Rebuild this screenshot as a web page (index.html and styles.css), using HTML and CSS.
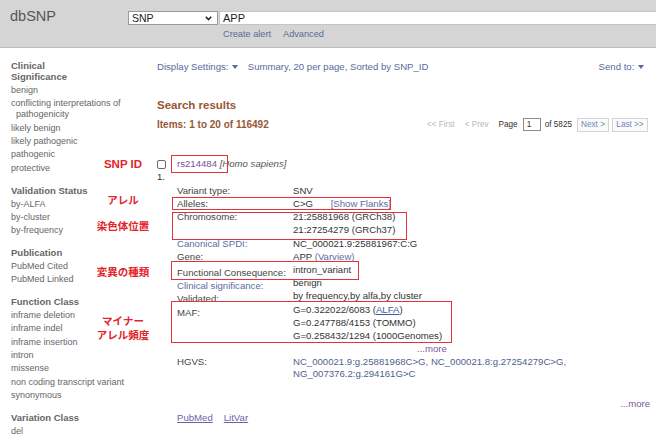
FILE: index.html
```html
<!DOCTYPE html>
<html lang="ja">
<head>
<meta charset="utf-8">
<title>dbSNP</title>
<link rel="stylesheet" href="styles.css">
</head>
<body>
<header class="hdr">
  <div class="logo">dbSNP</div>
  <div class="search">
    <div class="search-row">
      <div class="db-select"><span>SNP</span><svg class="chev" width="7" height="5" viewBox="0 0 7 5"><polyline points="0.8,0.8 3.5,3.6 6.2,0.8" fill="none" stroke="#222" stroke-width="1.5"/></svg></div>
      <div class="term">APP</div>
    </div>
    <div class="search-links"><a href="#">Create alert</a><a href="#">Advanced</a></div>
  </div>
</header>

<div class="page">
  <aside class="side">
    <section class="grp">
      <h3>Clinical Significance</h3>
      <ul>
        <li>benign</li>
        <li class="wrap">conflicting interpretations of pathogenicity</li>
        <li>likely benign</li>
        <li>likely pathogenic</li>
        <li>pathogenic</li>
        <li>protective</li>
      </ul>
    </section>
    <section class="grp">
      <h3>Validation Status</h3>
      <ul>
        <li>by-ALFA</li>
        <li>by-cluster</li>
        <li>by-frequency</li>
      </ul>
    </section>
    <section class="grp">
      <h3>Publication</h3>
      <ul>
        <li>PubMed Cited</li>
        <li>PubMed Linked</li>
      </ul>
    </section>
    <section class="grp">
      <h3>Function Class</h3>
      <ul>
        <li>inframe deletion</li>
        <li>inframe indel</li>
        <li>inframe insertion</li>
        <li>intron</li>
        <li>missense</li>
        <li>non coding transcript variant</li>
        <li>synonymous</li>
      </ul>
    </section>
    <section class="grp">
      <h3>Variation Class</h3>
      <ul>
        <li>del</li>
      </ul>
    </section>
  </aside>

  <main class="main">
    <div class="disp">
      <div><a href="#">Display Settings:</a> <svg class="tri" width="6" height="4" viewBox="0 0 6 4"><polygon points="0,0 6,0 3,4" fill="#5a6a9a"/></svg> <span class="disp-val">Summary, 20 per page, Sorted by SNP_ID</span></div>
      <div class="send"><a href="#">Send to:</a> <svg class="tri" width="6" height="4" viewBox="0 0 6 4"><polygon points="0,0 6,0 3,4" fill="#5a6a9a"/></svg></div>
    </div>

    <h2 class="results-h">Search results</h2>
    <div class="items">
      <div class="count">Items: 1 to 20 of 116492</div>
      <div class="pager">
        <span class="dim first">&lt;&lt; First</span>
        <span class="dim prev">&lt; Prev</span>
        <span class="pg-label">Page</span>
        <span class="pg-in">1</span>
        <span class="pg-of">of 5825</span>
        <span class="btn next">Next &gt;</span>
        <span class="btn last">Last &gt;&gt;</span>
      </div>
    </div>

    <div class="result">
      <div class="r-left">
        <div class="cb"></div>
        <div class="num">1.</div>
      </div>
      <div class="r-body">
        <div class="title"><a class="rs" href="#">rs214484</a> <i>[Homo sapiens]</i></div>
        <div class="tbl">
          <div class="lbl">Variant type:</div><div class="val">SNV</div>
          <div class="lbl">Alleles:</div><div class="val">C&gt;G <a class="blue flanks" href="#">[Show Flanks]</a></div>
          <div class="lbl">Chromosome:</div><div class="val">21:25881968 (GRCh38)</div>
          <div class="lbl"></div><div class="val">21:27254279 (GRCh37)</div>
          <div class="lbl blue">Canonical SPDI:</div><div class="val">NC_000021.9:25881967:C:G</div>
          <div class="lbl">Gene:</div><div class="val">APP <a class="blue" href="#">(Varview)</a></div>
          <div class="lbl lo">Functional Consequence:</div><div class="val">intron_variant</div>
          <div class="lbl lo blue">Clinical significance:</div><div class="val">benign</div>
          <div class="lbl lo">Validated:</div><div class="val">by frequency,by alfa,by cluster</div>
          <div class="lbl lo">MAF:</div><div class="val">G=0.322022/6083 (<a class="ul" href="#">ALFA</a>)</div>
          <div class="lbl"></div><div class="val">G=0.247788/4153 (TOMMO)</div>
          <div class="lbl"></div><div class="val">G=0.258432/1294 (1000Genomes)</div>
          <div class="lbl"></div><div class="val"><a class="more-in" href="#">...more</a></div>
          <div class="lbl">HGVS:</div><div class="val hgvs">NC_000021.9:g.25881968C&gt;G, NC_000021.8:g.27254279C&gt;G,<br>NG_007376.2:g.294161G&gt;C</div>
        </div>
        <div class="more-r"><a href="#">...more</a></div>
        <div class="links"><a href="#">PubMed</a><a href="#">LitVar</a></div>
      </div>
    </div>
  </main>

  <div class="note n-snp">SNP ID</div>
  <div class="note n-allele">アレル</div>
  <div class="note n-chr">染色体位置</div>
  <div class="note n-cons">変異の種類</div>
  <div class="note n-maf1">マイナー</div>
  <div class="note n-maf2">アレル頻度</div>

  <div class="box b-snp"></div>
  <div class="box b-allele"></div>
  <div class="box b-chr"></div>
  <div class="box b-cons"></div>
  <div class="box b-maf"></div>
</div>
</body>
</html>
```

FILE: styles.css
```css
* { box-sizing: border-box; margin: 0; padding: 0; }

body {
  margin: 0;
  width: 658px;
  height: 441px;
  overflow: hidden;
  background: #fff;
  color: #333;
  font-family: "Liberation Sans", Arial, sans-serif;
}

a { color: inherit; text-decoration: none; }

/* ---------- header ---------- */
.hdr {
  display: flex;
  align-items: flex-start;
  height: 48px;
  margin-right: 2px;
  background: #d5d5d5;
  border-bottom: 1px solid #bdbdbd;
}
.logo {
  width: 128px;
  flex: none;
  padding: 8px 0 0 10px;
  font-size: 14.5px;
  line-height: 17px;
  color: #555;
}
.search { flex: 1; padding-top: 11px; }
.search-row { display: flex; gap: 1px; height: 14px; }
.db-select {
  width: 90px;
  height: 14px;
  flex: none;
  display: flex;
  align-items: center;
  justify-content: space-between;
  padding: 0 5px 0 3px;
  background: #fff;
  border: 1px solid #9a9a9a;
  font-size: 10.5px;
  color: #222;
}
.chev { display: block; }
.term {
  flex: 1;
  height: 14px;
  padding-left: 3px;
  background: #fff;
  border: 1px solid #c4c4c4;
  border-right: none;
  font-size: 11px;
  line-height: 12px;
  color: #222;
}
.search-links {
  display: flex;
  gap: 12px;
  margin-top: 3.5px;
  padding-left: 95px;
  font-size: 9.2px;
  line-height: 11px;
  color: #5a6a95;
}

/* ---------- page ---------- */
.page { position: relative; display: flex; }

.side {
  width: 157px;
  flex: none;
  padding: 12.2px 15px 0 11px;
  font-size: 9px;
  color: #666;
}
.grp { margin-bottom: 9.8px; }
.grp h3 {
  max-width: 85px;
  margin-bottom: 1.85px;
  font-size: 9.5px;
  font-weight: bold;
  line-height: 11px;
  color: #666;
}
.grp li { list-style: none; line-height: 11px; padding: 1.15px 0; }
.grp li.wrap { padding-left: 5px; text-indent: -5px; }

.main { flex: 1; padding: 12.2px 8px 0 0; font-size: 9.6px; }

.disp {
  display: flex;
  justify-content: space-between;
  line-height: 13px;
  color: #5a6a9a;
}
.tri { vertical-align: 1px; margin: 0 4px 0 1px; }
.disp-val { margin-left: 3px; }
.send .tri { margin-right: 0; }
.send { margin-right: 6px; }

.results-h {
  margin-top: 24.5px;
  font-size: 11.5px;
  font-weight: bold;
  line-height: 14px;
  color: #985735;
}
.items {
  margin-top: 6.3px;
  height: 14px;
  display: flex;
  justify-content: space-between;
  align-items: center;
}
.count { font-size: 10px; font-weight: bold; color: #985735; }

.pager { display: flex; align-items: center; margin-right: 2px; font-size: 8.2px; color: #333; }
.dim { color: #b8b8b8; margin-right: 10px; }
.pg-label { margin-right: 5px; }
.pg-in {
  width: 18px;
  height: 13px;
  padding-left: 3px;
  margin-right: 4px;
  border: 1px solid #8c8c8c;
  line-height: 11px;
}
.pg-of { margin-right: 5px; }
.btn {
  height: 14px;
  line-height: 12px;
  text-align: center;
  border: 1px solid #d4d4d4;
  background: #fafafa;
  color: #7284b6;
}
.next { width: 32px; margin-right: 3px; }
.last { width: 36px; }

/* ---------- result ---------- */
.result { display: flex; margin-top: 25.5px; }
.r-left { width: 20px; flex: none; line-height: 13px; }
.cb {
  width: 9px;
  height: 9px;
  margin: 2.5px 0 1.5px;
  border: 1px solid #6a6a6a;
  border-radius: 2px;
  background: #fff;
}
.num { color: #333; }
.r-body { flex: 1; }
.title { line-height: 13px; color: #555; }
.rs { color: #7b4f9e; }

.tbl {
  display: grid;
  grid-template-columns: 116px 1fr;
  grid-auto-rows: 13.2px;
  margin-top: 13.4px;
  line-height: 13.2px;
  white-space: nowrap;
}
.lbl { color: #444; }
.lbl.lo { padding-top: 3px; }
.val { color: #333; }
.blue { color: #5b6d9e; }
.flanks { margin-left: 15px; }
.ul { color: #3b5aa0; text-decoration: underline; }
.more-in { margin-left: 124px; color: #7a5aa0; }
.hgvs { grid-row: span 2; color: #4f5f8f; line-height: 12px; padding-top: 0.6px; }

.more-r { margin-top: 15.6px; text-align: right; line-height: 13px; color: #7a5aa0; }
.links { display: flex; gap: 11px; margin-top: 1px; line-height: 13px; }
.links a { color: #6b5fa8; text-decoration: underline; }

/* ---------- annotation overlay ---------- */
.note {
  position: absolute;
  left: 94px;
  width: 58px;
  text-align: center;
  font-family: "Noto Sans CJK JP", sans-serif;
  font-weight: 700;
  font-size: 10.5px;
  line-height: 14px;
  color: #e3242b;
  white-space: nowrap;
}
.n-snp { top: 108.5px; font-family: "Liberation Sans", Arial, sans-serif; font-size: 11.5px; }
.n-allele { top: 145px; }
.n-chr { top: 171px; }
.n-cons { top: 217px; }
.n-maf1 { top: 267px; line-height: 12px; }
.n-maf2 { top: 280.5px; line-height: 12px; }

.box { position: absolute; border: 1.5px solid #e2323a; }
.b-snp { left: 171px; top: 107px; width: 57px; height: 18px; }
.b-allele { left: 172px; top: 149px; width: 219px; height: 13px; }
.b-chr { left: 172px; top: 164px; width: 235px; height: 28px; }
.b-cons { left: 171px; top: 213px; width: 188px; height: 19px; }
.b-maf { left: 171px; top: 253px; width: 281px; height: 42px; }
```
